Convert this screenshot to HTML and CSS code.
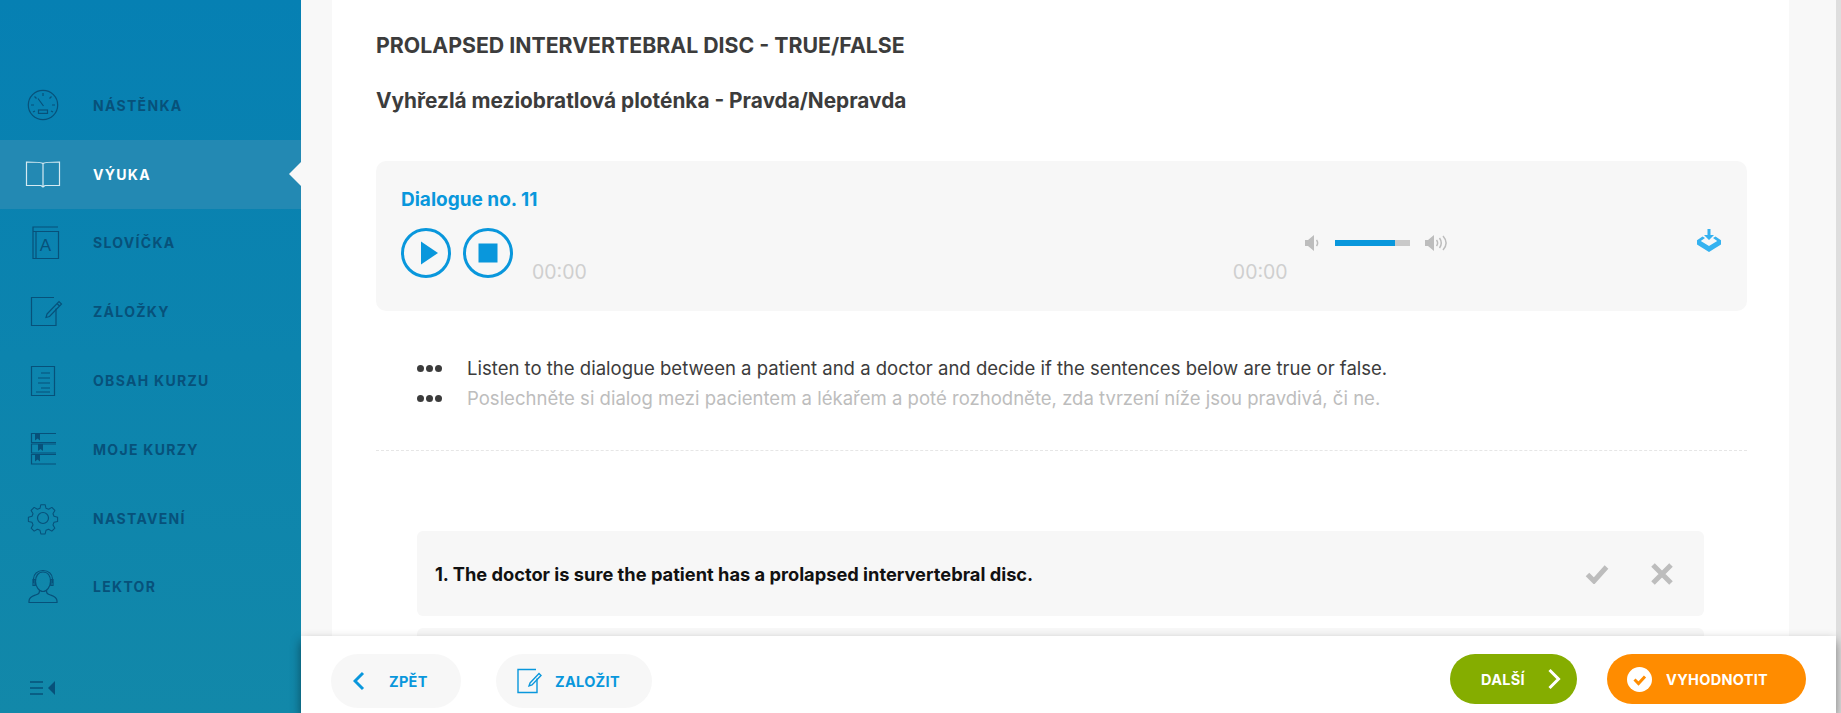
FILE: index.html
```html
<!DOCTYPE html>
<html lang="en">
<head>
  <meta charset="UTF-8" />
  <title>Prolapsed intervertebral disc</title>
  <link rel="stylesheet" href="styles.css">
</head>
<body>

  <!-- Sidebar -->
  <div class="sidebar">
    <ul class="menu">
      <li>
        <svg class="menu-icon" viewBox="0 0 40 40"><circle cx="20" cy="20" r="14.7"/><path d="M20 8v3M11.500 11.500l2 2M28.500 11.500l-2 2M8 20h3M32 20h-3M10 27l2-1M30 27l-2-1M15 13.500l5.500 7.500"/><rect x="15.500" y="25" width="9" height="3.400"/></svg>
        <span>NÁSTĚNKA</span>
      </li>
      <li class="active">
        <svg class="menu-icon" viewBox="0 0 40 40"><path d="M20 9.500c-1-1-3-1.500-16.500-1.500v23.500h14.500l2 1.500 2-1.500h14.500v-23.500c-13.500 0-15.500 .5-16.500 1.500zM20 9.500v23"/></svg>
        <span>VÝUKA</span>
      </li>
      <li>
        <svg class="menu-icon" viewBox="0 0 40 40"><path d="M10 8.500v27h25.500v-27zM10 8.500v-4.500h25M13 35.500v-27"/><text x="23" y="28" class="icon-letter">A</text></svg>
        <span>SLOVÍČKA</span>
      </li>
      <li>
        <svg class="menu-icon" viewBox="0 0 40 40"><path d="M31 5.500h-22.500v28h24.500v-17"/><path d="M24 22l12-12.500 2.500 2.500-12 12.500-3.500 1zM34 11.500l2.500 2.500"/></svg>
        <span>ZÁLOŽKY</span>
      </li>
      <li>
        <svg class="menu-icon" viewBox="0 0 40 40"><path d="M8.500 5.500h23v29h-23zM18 12h9M15 17h12M15 22h12M18 27h9M13 31h14"/></svg>
        <span>OBSAH KURZU</span>
      </li>
      <li>
        <svg class="menu-icon" viewBox="0 0 40 40"><path d="M33 4.500h-24.500v9h24.500M33 15h-24.500v9h24.500M33 25.500h-24.500v9.500h24.500"/><path class="solid" d="M12 4.500h5v7l-2.500-2-2.500 2zM15 15h5v7l-2.500-2-2.500 2zM12 25.500h5v7l-2.500-2-2.500 2z"/></svg>
        <span>MOJE KURZY</span>
      </li>
      <li>
        <svg class="menu-icon gear" viewBox="0 0 40 40"><circle cx="20" cy="20" r="5.500"/><path transform="translate(20 20) scale(.86) translate(-20 -20)" d="M17.500 4.500h5l1 4.200 3 1.200 3.800-2.200 3.500 3.500-2.200 3.800 1.200 3 4.200 1v5l-4.200 1-1.200 3 2.200 3.800-3.500 3.500-3.800-2.200-3 1.200-1 4.200h-5l-1-4.200-3-1.200-3.800 2.200-3.500-3.500 2.200-3.800-1.200-3-4.200-1v-5l4.200-1 1.200-3-2.200-3.800 3.500-3.500 3.800 2.200 3-1.200z"/></svg>
        <span>NASTAVENÍ</span>
      </li>
      <li>
        <svg class="menu-icon" viewBox="0 0 40 40"><path d="M12.500 14.500c0-6 3-9.500 7.500-9.500s7.500 3.500 7.500 9.500c0 5-3.500 10-7.500 10s-7.500-5-7.500-10zM10.500 16v-4c0-5 4-8.500 9.500-8.500s9.500 3.500 9.500 8.500v4M10 12.500h2v6h-2zM28 12.500h2v6h-2zM16.500 23.500c0 3-1 3.500-4 4.500s-6.500 2-6.500 6v1.500h28v-1.500c0-4-3.500-5-6.500-6s-4-1.500-4-4.500"/></svg>
        <span>LEKTOR</span>
      </li>
    </ul>
    <svg class="collapse" viewBox="0 0 26 14"><path d="M0 1h13M0 7h13M0 13h13" /><path class="solid" d="M25 0v14l-7-7z"/></svg>
  </div>

  <!-- Page -->
  <div class="main">
    <div class="panel">
      <h1>PROLAPSED INTERVERTEBRAL DISC - TRUE/FALSE</h1>
      <h2>Vyhřezlá meziobratlová ploténka - Pravda/Nepravda</h2>

      <div class="player">
        <div class="player-title">Dialogue no. 11</div>
        <div class="player-row">
          <button class="round-btn">
            <svg viewBox="0 0 50 50"><circle cx="25" cy="25" r="23.500"/><path class="fill" d="M20 13.500l17 11.500-17 11.500z"/></svg>
          </button>
          <button class="round-btn">
            <svg viewBox="0 0 50 50"><circle cx="25" cy="25" r="23.500"/><rect class="fill" x="15.500" y="15.500" width="19" height="19"/></svg>
          </button>
          <span class="time">00:00</span>
          <span class="time time-end">00:00</span>
          <div class="volume">
            <svg class="speaker" width="15" height="18" viewBox="0 0 15 18"><path class="fill-grey" d="M0 6h3l6-5v16l-6-5h-3z"/><path class="line-grey" d="M11.500 6c1.500 2 1.500 4 0 6"/></svg>
            <div class="volume-bar"><div class="volume-level" style="width: 80%"></div></div>
            <svg class="speaker" width="23" height="18" viewBox="0 0 23 18"><path class="fill-grey" d="M0 6h3l6-5v16l-6-5h-3z"/><path class="line-grey" d="M11.500 6c1.500 2 1.500 4 0 6M14.500 4c2.500 3.500 2.500 6.500 0 10M18 2c4 4.500 4 9.500 0 14"/></svg>
          </div>
          <svg class="download" width="24" height="24" viewBox="0 0 24 24"><path class="fill-sky" d="M10.500 0h3v6h3.500l-5 5-5-5h3.500z"/><path class="fill-sky" d="M5.500 7.500l2.500 1.600-4.200 2.900 8.200 5 8.200-5-4.200-2.900 2.500-1.600 5.500 3.700v4.300l-12 7.500-12-7.500v-4.300z"/></svg>
        </div>
      </div>

      <div class="instructions">
        <div class="instruction"><span class="dots"><i></i><i></i><i></i></span>Listen to the dialogue between a patient and a doctor and decide if the sentences below are true or false.</div>
        <div class="instruction muted"><span class="dots"><i></i><i></i><i></i></span>Poslechněte si dialog mezi pacientem a lékařem a poté rozhodněte, zda tvrzení níže jsou pravdivá, či ne.</div>
      </div>

      <div class="questions">
        <div class="question">
          <span>1. The doctor is sure the patient has a prolapsed intervertebral disc.</span>
          <div class="answers">
            <svg width="24" height="20" viewBox="0 0 24 20"><path d="M2.500 10.500l6.500 6.500 12.500-14"/></svg>
            <svg width="22" height="22" viewBox="0 0 22 22"><path d="M2 2l18 18M20 2l-18 18"/></svg>
          </div>
        </div>
        <div class="question"></div>
      </div>
    </div>
  </div>

  <!-- Bottom bar, lies over the page -->
  <div class="bottom-bar">
    <div class="bar-group">
      <button class="btn btn-light btn-back">
        <svg width="12" height="20" viewBox="0 0 12 20"><path d="M10 2l-8 8 8 8"/></svg>
        ZPĚT
      </button>
      <button class="btn btn-light btn-save">
        <svg class="note" width="26" height="26" viewBox="0 0 26 26"><path d="M19 1.500h-18v23h19v-14"/><path d="M13 15l9-9.500 2 2-9 9.500-3 1z"/></svg>
        ZALOŽIT
      </button>
    </div>
    <div class="bar-group bar-right">
      <button class="btn btn-next">
        DALŠÍ
        <svg width="14" height="22" viewBox="0 0 14 22"><path d="M2.500 2l9 9-9 9"/></svg>
      </button>
      <button class="btn btn-finish">
        <svg width="25" height="25" viewBox="0 0 25 25"><circle cx="12.500" cy="12.500" r="12.500"/><path d="M7.500 12.500l4 4 6.500-7"/></svg>
        VYHODNOTIT
      </button>
    </div>
  </div>

</body>
</html>
```

FILE: styles.css
```css
html, body {
  height: 100%;
}
body {
  margin: 0;
  display: flex;
  overflow: hidden;
  font-family: "Inter", sans-serif;
  background: #dedede;
  color: #3c3c3c;
}
button {
  font-family: inherit;
  border: 0;
  padding: 0;
}

/* sidebar */
.sidebar {
  width: 301px;
  flex-shrink: 0;
  display: flex;
  flex-direction: column;
  background: linear-gradient(#0680b3, #1288a9);
}
.menu {
  list-style: none;
  margin: 0;
  padding: 71px 0 0;
}
.menu li {
  height: 68.8px;
  display: flex;
  align-items: center;
  gap: 30px;
  padding-left: 23px;
  position: relative;
  font-size: 14px;
  font-weight: 700;
  letter-spacing: 1.3px;
  color: #07517a;
}
.menu li.active {
  background: #2389b3;
  color: #fff;
}
.menu li.active:after {
  content: "";
  position: absolute;
  right: 0;
  top: 22px;
  border-style: solid;
  border-width: 12px 12px 12px 0;
  border-color: transparent #f8f8f8 transparent transparent;
}
.menu-icon {
  width: 40px;
  height: 40px;
  fill: none;
  stroke: #07517a;
  stroke-width: 1.2;
}
.active .menu-icon {
  stroke: #d5eaf2;
}
.gear {
  stroke-linejoin: round;
}
.solid {
  fill: #07517a;
  stroke: none;
}
.icon-letter {
  font: 17px "Liberation Sans", sans-serif;
  fill: #07517a;
  stroke: none;
  text-anchor: middle;
}
.collapse {
  width: 26px;
  height: 14px;
  margin: 60px 0 0 30px;
  fill: none;
  stroke: #07517a;
  stroke-width: 1.6;
}

/* page */
.main {
  flex: 1;
  background: #f8f8f8;
  padding: 0 47px 0 31px;
  margin-right: 5px;
}
.panel {
  background: #fff;
  height: 100%;
  padding: 0 42px 0 44px;
  box-sizing: border-box;
}
h1 {
  margin: 0;
  padding-top: 32px;
  font-size: 21.3px;
  line-height: 26px;
  font-weight: 700;
}
h2 {
  margin: 30px 0 0;
  font-size: 20.8px;
  line-height: 26px;
  font-weight: 700;
}

/* audio player */
.player {
  margin-top: 47px;
  height: 150px;
  box-sizing: border-box;
  padding: 27px 25px 0;
  background: #f7f7f7;
  border-radius: 10px;
}
.player-title {
  font-size: 19px;
  line-height: 24px;
  font-weight: 700;
  color: #0997dc;
}
.player-row {
  margin-top: 16px;
  display: flex;
  align-items: flex-start;
}
.round-btn {
  width: 50px;
  height: 50px;
  margin-right: 12px;
  background: none;
}
.round-btn svg {
  display: block;
  fill: none;
  stroke: #0997dc;
  stroke-width: 3;
}
.round-btn .fill {
  fill: #0997dc;
  stroke: none;
}
.time {
  margin: 32px 0 0 7px;
  font-size: 19.5px;
  line-height: 24px;
  color: #cfcfcf;
}
.time-end {
  margin-left: 646px;
}
.volume {
  margin: 6px 0 0 17px;
  display: flex;
  align-items: center;
  gap: 15px;
}
.speaker {
  display: block;
}
.fill-grey {
  fill: #bdbdbd;
}
.line-grey {
  fill: none;
  stroke: #bdbdbd;
  stroke-width: 1.500;
}
.volume-bar {
  width: 75px;
  height: 6px;
  background: #c9c9c9;
}
.volume-level {
  height: 100%;
  background: #0997dc;
}
.download {
  margin: 1px 1px 0 auto;
}
.fill-sky {
  fill: #35b2f0;
}

/* instructions */
.instructions {
  margin-top: 42px;
  padding-bottom: 37px;
  border-bottom: 1px dashed #e6e6e6;
}
.instruction {
  display: flex;
  align-items: center;
  padding-left: 41px;
  font-size: 18.55px;
  line-height: 30px;
}
.instruction.muted {
  color: #bdbdbd;
}
.dots {
  display: flex;
  gap: 2px;
  width: 50px;
  flex-shrink: 0;
}
.dots i {
  width: 7px;
  height: 7px;
  border-radius: 50%;
  background: #3c3c3c;
}

/* questions */
.questions {
  margin: 80px 43px 0 41px;
}
.question {
  height: 85px;
  box-sizing: border-box;
  margin-bottom: 12px;
  padding: 0 31px 0 18px;
  display: flex;
  align-items: center;
  justify-content: space-between;
  background: #f7f7f7;
  border-radius: 6px;
  font-size: 18.25px;
  font-weight: 700;
  color: #111;
}
.answers {
  display: flex;
  align-items: center;
  gap: 42px;
}
.answers svg {
  fill: none;
  stroke: #bdbdbd;
  stroke-width: 5;
}

/* bottom bar */
.bottom-bar {
  position: absolute;
  left: 301px;
  right: 5px;
  bottom: 0;
  height: 77px;
  box-sizing: border-box;
  padding: 18px 30px 0;
  display: flex;
  justify-content: space-between;
  background: #fff;
  box-shadow: 0 5px 10px rgba(0, 0, 0, 0.45);
}
.bar-group {
  display: flex;
  gap: 35px;
}
.bar-right {
  gap: 30px;
}
.btn {
  height: 54px;
  border-radius: 27px;
  display: flex;
  align-items: center;
  font-size: 14.5px;
  font-weight: 700;
  letter-spacing: 0.3px;
}
.btn svg {
  fill: none;
  stroke: currentColor;
  stroke-width: 3;
  flex-shrink: 0;
}
.btn-light {
  background: #f7f7f7;
  color: #0997dc;
}
.btn-back {
  width: 130px;
  padding-left: 22px;
  gap: 24px;
}
.btn-save {
  width: 156px;
  padding-left: 21px;
  gap: 12px;
}
.btn-save .note {
  stroke-width: 1.4;
}
.btn-next {
  width: 127px;
  height: 50px;
  padding-left: 31px;
  gap: 22px;
  background: #85ad00;
  color: #fff;
}
.btn-finish {
  width: 199px;
  height: 50px;
  padding-left: 20px;
  gap: 14px;
  background: #ff8c00;
  color: #fff;
}
.btn-finish svg circle {
  fill: #fff;
  stroke: none;
}
.btn-finish svg path {
  stroke: #ff8c00;
}
```
